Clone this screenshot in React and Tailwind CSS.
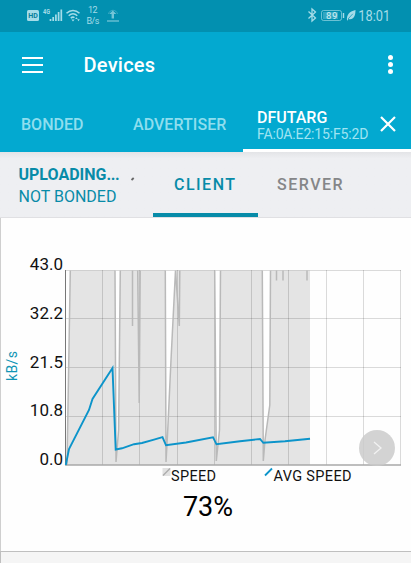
import React from 'react';

const gridX = [102.5, 139.5, 177.5, 214.5, 251.5, 288.5, 326.5, 363.5, 400.5];
const gridY = [270.5, 318.5, 367.5, 416.5];

const axisLabels = [
  { text: '43.0', y: 270.3 },
  { text: '32.2', y: 319 },
  { text: '21.5', y: 367.6 },
  { text: '10.8', y: 416.4 },
  { text: '0.0', y: 465 },
];

const speedArea =
  'M67 465L70.3 270.5H115L116 462L118.6 430L120.3 270.5H165.3L166 462L167.5 435L171 360L175.5 270.5H214.7L216.3 461L219.5 430L220.5 270.5H262.3L263.3 461L265 440L269.8 405L270.5 270.5H310V465Z';

const speedLine =
  'M67 465L70.3 270.5M115 270.5L116 462L118.6 430L120.3 270.5M132.5 270.5V326M137.7 270.5L139.2 403L140.2 270.5M165.3 270.5L166 462L167.5 435L171 360L175.5 270.5L179.3 326L179.8 270.5M214.7 270.5L216.3 461L219.5 430L220.5 270.5M262.3 270.5L263.3 461L265 440L269.8 405L270.5 270.5M276.5 270.5V280.5M283 270.5V280.5M307 270.5V280.5';

const avgPoints =
  '65.8,465 69,449 89,410 92.5,399 112.5,368 115.7,449.5 122,448.3 134,444.2 142,443 154,439.7 162.5,437.2 166,445.3 186,442.5 213,437.2 216.5,444.3 240,441.2 260,439 263.3,442.8 285,441.2 310,438.7';

function StatusBar() {
  return (
    <div className="flex h-8 items-start bg-[#0290b0] text-[#a5dce8]">
      <svg className="h-8 w-[126px]" viewBox="0 0 126 32" fill="none" stroke="currentColor">
        <rect x="27" y="10" width="12" height="11" rx="1.5" fill="currentColor" stroke="none" />
        <text x="28.2" y="18.4" fontSize="8" fontWeight="700" fill="#087f9c" stroke="none" textLength="9.6" lengthAdjust="spacingAndGlyphs">HD</text>
        <text x="43" y="14.2" fontSize="7" fontWeight="700" fill="currentColor" stroke="none" textLength="7" lengthAdjust="spacingAndGlyphs">4G</text>
        <path d="M50.5 21v-2M53.2 21v-4M55.9 21v-6.5M58.6 21v-9M61.3 21V9.5" strokeWidth="1.7" />
        <path d="M66.5 13.2c3.8-3.7 9.2-3.7 13 0M68.7 15.8c2.6-2.4 6-2.4 8.6 0M70.8 18.1c1.3-1.2 2.6-1.2 3.7-.5" strokeWidth="1.5" />
        <path d="M73 21.4l-1.6-1.9h3.2zM76.4 17.2l1.3 1.9h-2.6zM78.5 21.2l-1.3-1.9h2.6z" fill="currentColor" stroke="none" />
        <text x="88" y="13.2" fontSize="9" fill="currentColor" stroke="none" textLength="9.5">12</text>
        <text x="86.5" y="23.7" fontSize="9" fill="currentColor" stroke="none" textLength="13">B/s</text>
        <g opacity=".7">
          <path d="M107 21h12" strokeWidth="1.3" />
          <path d="M108.5 14c1-5 8-5 9 0" strokeWidth="1" opacity=".5" />
          <path d="M112.8 10.500l3.500 3.500h-2.300v4.500h-2.400v-4.500h-2.300z" fill="currentColor" stroke="none" />
        </g>
      </svg>
      <svg className="ml-auto h-8 w-[111px]" viewBox="300 0 111 32" fill="none" stroke="currentColor">
        <path d="M308.5 11.5l7 6.5-3.5 3V9l3.5 3-7 6.5" strokeWidth="1.3" />
        <rect x="321.5" y="10.5" width="20" height="10" rx="2" strokeWidth="1" opacity=".65" />
        <rect x="323" y="12" width="15" height="7" fill="currentColor" stroke="none" opacity=".3" />
        <path d="M343.500 13v5" strokeWidth="1.400" />
        <text x="326" y="18.600" fontSize="9.500" fontWeight="500" fill="#c0e8f0" stroke="none" textLength="11.300">89</text>
        <path d="M347 20.500c-.5-5.500 2-9 8.500-10.500 0 7-2.500 10.300-7.200 8.900l-.8 1.600z" fill="currentColor" stroke="none" />
        <path d="M348 19l4.800-5.200" stroke="#0290b0" strokeWidth=".7" />
        <text x="358.300" y="20.700" fontSize="14.500" fill="currentColor" stroke="none" textLength="32" lengthAdjust="spacingAndGlyphs">18:01</text>
      </svg>
    </div>
  );
}

function Toolbar() {
  return (
    <div className="flex h-[65px] items-center bg-[#03a9d0] pl-[22px] pr-[18px] text-white">
      <div className="flex w-[21px] flex-col gap-[5px]">
        <span className="h-[2px] bg-white" />
        <span className="h-[2px] bg-white" />
        <span className="h-[2px] bg-white" />
      </div>
      <h1 className="ml-[40.5px] pt-px text-[20px] font-medium leading-6 tracking-[0.25px]">Devices</h1>
      <div className="ml-auto flex flex-col gap-[2px]">
        <span className="size-[5px] rounded-full bg-white" />
        <span className="size-[5px] rounded-full bg-white" />
        <span className="size-[5px] rounded-full bg-white" />
      </div>
    </div>
  );
}

function DeviceTabs() {
  return (
    <div className="flex h-[55px] bg-[#03a9d0] text-[16px] text-[#8fdeee]">
      <div className="w-[133px] whitespace-nowrap pl-[21px] pt-[18px] font-medium leading-5">BONDED</div>
      <div className="w-[110px] whitespace-nowrap pt-[18px] font-medium leading-5 tracking-[0.05px]">ADVERTISER</div>
      <div className="flex flex-1 border-b-[3px] border-white pl-[14px]">
        <div className="w-[121px] whitespace-nowrap pt-[12px]">
          <p className="font-medium leading-[17px] text-white">DFUTARG</p>
          <p className="text-[14px] leading-[17px] tracking-[-0.15px] text-[#a0e4f2]">FA:0A:E2:15:F5:2D</p>
        </div>
        <svg className="ml-[2px] mt-[19px] size-4" viewBox="0 0 16 16" stroke="white" strokeWidth="2.2">
          <path d="M1 1l14 14M15 1L1 15" />
        </svg>
      </div>
    </div>
  );
}

function ConnectionBar() {
  return (
    <div className="flex h-[66px] border-b border-[#e0e0e3] bg-gradient-to-b from-[#e3e4e7] via-[#eeeff2] via-10% to-[#eeeff2] text-[16px]">
      <div className="w-[111px] whitespace-nowrap pl-[18.5px] pt-[12px] text-[#078ba8]">
        <p className="font-bold leading-[22px]">UPLOADING<span className="tracking-[-0.4px]">...</span></p>
        <p className="leading-[22px]">NOT BONDED</p>
      </div>
      <svg className="mt-[24px] h-[6px] w-[42px]" viewBox="0 0 42 6">
        <path d="M20.500 4l2.200-2" stroke="#666" strokeWidth="1.800" />
      </svg>
      <div className="w-[105px] border-b-[4px] border-[#078ba8] pl-[21px] pt-[22px] font-medium leading-[22px] tracking-[1.5px] text-[#078ba8]">CLIENT</div>
      <div className="pl-[19px] pt-[22px] font-medium leading-[22px] tracking-[1.5px] text-[#858688]">SERVER</div>
    </div>
  );
}

function SpeedChart() {
  return (
    <svg className="block h-[272px] w-[410px]" viewBox="1 218 410 272" fill="none">
      <path d={speedArea} fill="#e4e4e4" />
      <g stroke="#000" strokeOpacity=".14" strokeWidth="1">
        {gridX.map((x) => (
          <path key={x} d={`M${x} 270V465`} />
        ))}
        {gridY.map((y) => (
          <path key={y} d={`M65 ${y}H401`} />
        ))}
      </g>
      <path d={speedLine} stroke="#b9b9b9" strokeWidth="1.500" />
      <path d="M65.500 270V465" stroke="#777" />
      <path d="M65 465H401" stroke="#a9a9a9" strokeWidth="1.500" />
      <polyline points={avgPoints} stroke="#0c94ca" strokeWidth="1.900" />

      {axisLabels.map((label) => (
        <text key={label.text} x="63" y={label.y} textAnchor="end" fontSize="17" fill="#111">{label.text}</text>
      ))}
      <text transform="translate(16.500 381) rotate(-90)" fontSize="14" fill="#1295b5" textLength="30">kB/s</text>

      <rect x="162.500" y="468" width="8" height="8" fill="#e2e2e2" />
      <path d="M163 475.500l7-7" stroke="#aaa" strokeWidth="1.200" />
      <text x="171" y="481" fontSize="14.500" fill="#111" textLength="45">SPEED</text>
      <path d="M265 475.500l7-7" stroke="#0c94ca" strokeWidth="1.800" />
      <text x="273.500" y="481" fontSize="14.500" fill="#111" textLength="78">AVG SPEED</text>

      <circle cx="377" cy="448" r="18" fill="#c9c9c9" fillOpacity=".82" />
      <path d="M374 442l7 6-7 6" stroke="#f2f2f2" strokeWidth="1.300" />
    </svg>
  );
}

export default function App() {
  return (
    <div className="flex h-[563px] w-[411px] flex-col overflow-hidden bg-[#fefefe] font-['Roboto',sans-serif]">
      <StatusBar />
      <Toolbar />
      <DeviceTabs />
      <ConnectionBar />
      <div className="border-l border-[#cfcfcf]">
        <SpeedChart />
        <p className="h-[61px] pl-[4px] text-center text-[27px] leading-[35px] text-black">73%</p>
      </div>
      <div className="flex-1 border-l border-t border-[#bfbfbf] bg-[#f5f5f5]" />
    </div>
  );
}
